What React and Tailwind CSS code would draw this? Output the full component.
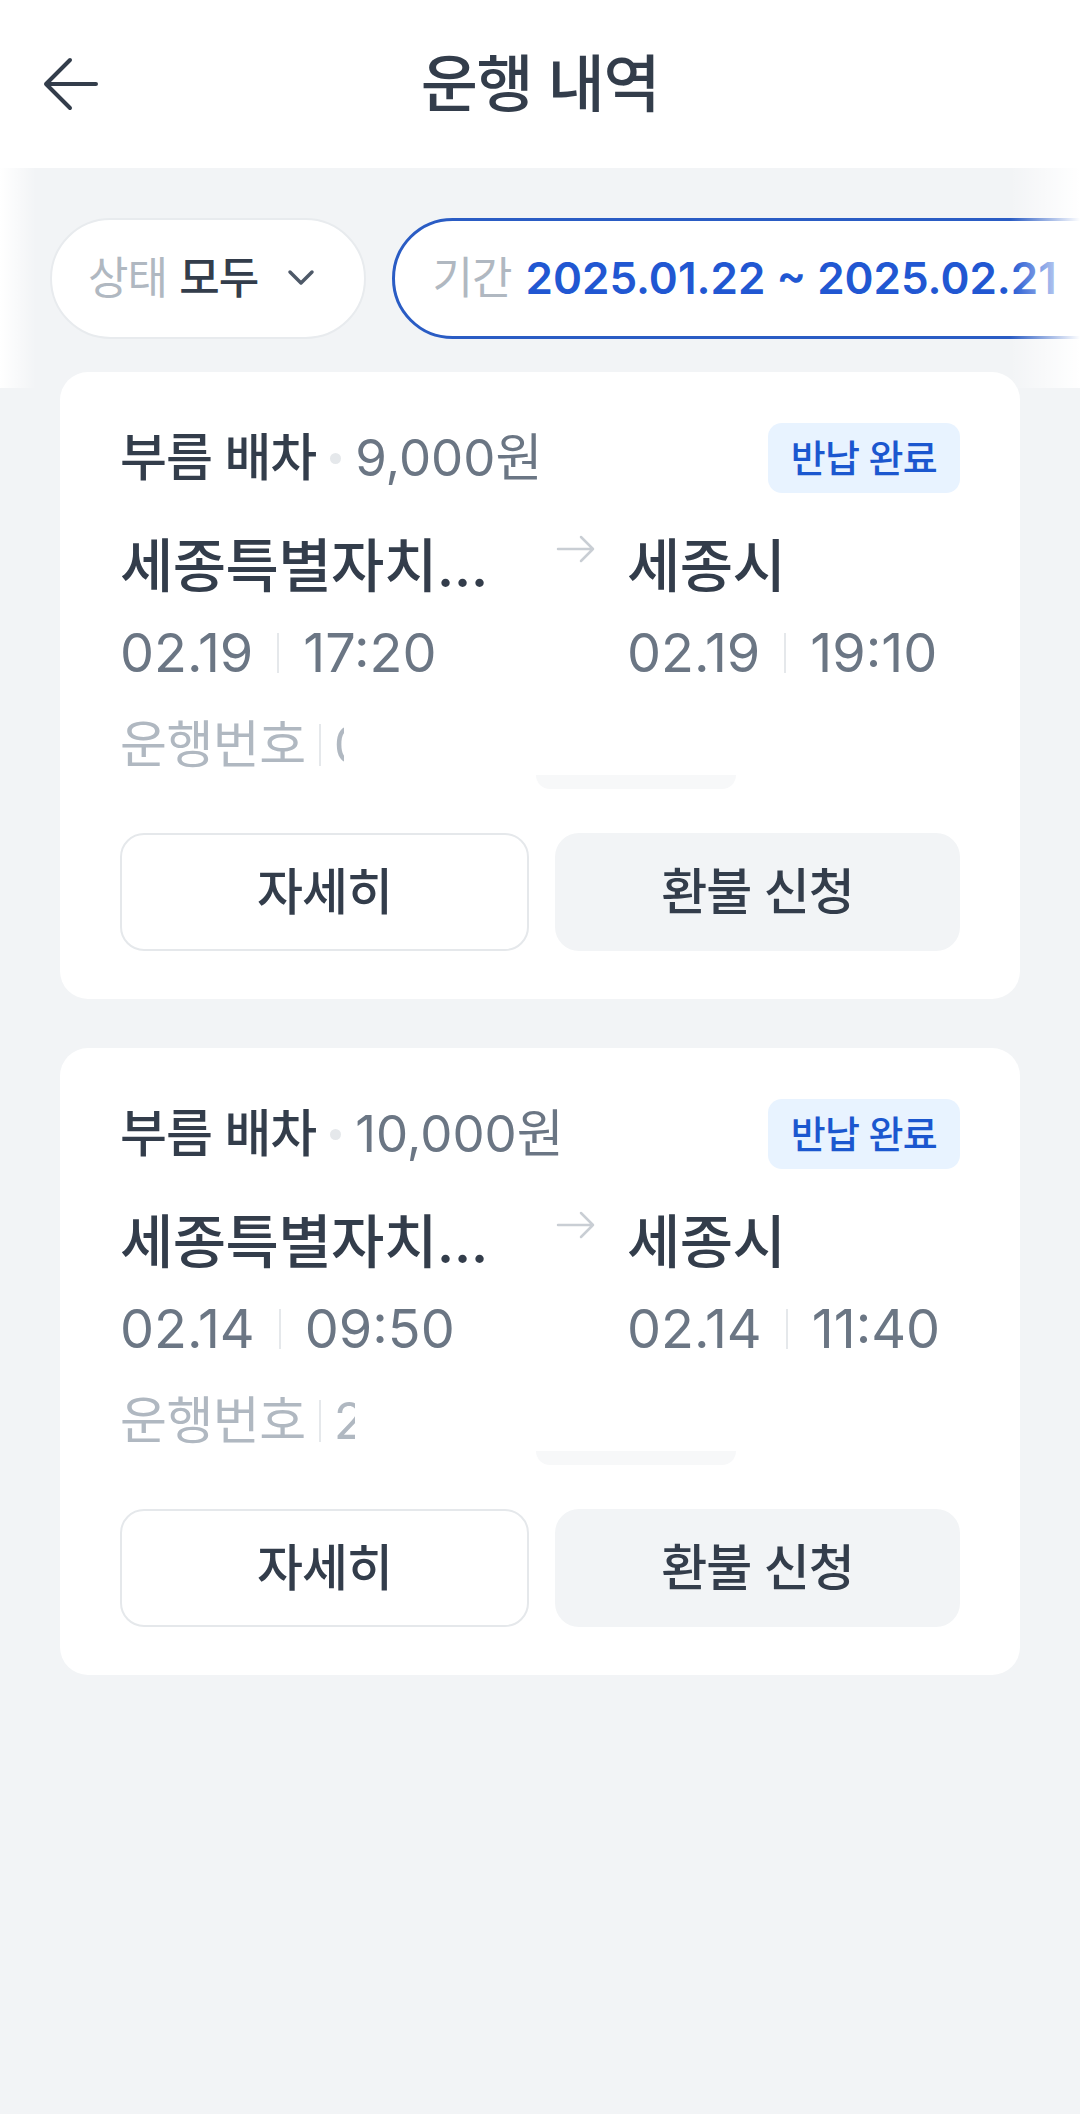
import React from "react";

const trips = [
  {
    price: "9,000원",
    from: "세종특별자치...",
    to: "세종시",
    date: "02.19",
    start: "17:20",
    end: "19:10",
    no: "0",
    noWidth: "w-[10px]",
  },
  {
    price: "10,000원",
    from: "세종특별자치...",
    to: "세종시",
    date: "02.14",
    start: "09:50",
    end: "11:40",
    no: "2",
    noWidth: "w-[21px]",
  },
];

const BackIcon = () => (
  <svg viewBox="0 0 56 56" className="w-[56px] h-[56px]" fill="none" stroke="#333d4b" strokeWidth={4} strokeLinecap="round" strokeLinejoin="round">
    <path d="M27 4 3 28l24 24M3 28h50" />
  </svg>
);

const Chevron = () => (
  <svg viewBox="0 0 30 20" className="w-[30px] h-[20px]" fill="none" stroke="#4e5968" strokeWidth={3.5} strokeLinecap="round" strokeLinejoin="round">
    <path d="M4 4l11 11L26 4" />
  </svg>
);

const SmallArrow = () => (
  <svg viewBox="0 0 40 28" className="w-[40px] h-[28px]" fill="none" stroke="#c9ced4" strokeWidth={2.5} strokeLinecap="round" strokeLinejoin="round">
    <path d="M2 14h35M25 2l12 12-12 12" />
  </svg>
);

const DateTime = ({ date, time }) => (
  <div className="mt-[23px] flex items-center h-[64px] text-[54px] leading-[64px] text-[#6b7684]">
    <span>{date}</span>
    <span className="mx-[24px] w-[2px] h-[40px] bg-[#e5e8eb]" />
    <span>{time}</span>
  </div>
);

const TripCard = ({ trip }) => (
  <div className="rounded-[28px] bg-white px-[60px] pt-[51px] pb-[48px]">
    <div className="flex items-center justify-between h-[70px]">
      <div className="flex items-center text-[51px]">
        <span className="font-medium text-[#333d4b] tracking-[-0.02em]">부름 배차</span>
        <span className="mx-[14px] w-[11px] h-[11px] rounded-full bg-[#e5e8eb]" />
        <span className="text-[#6b7684]">{trip.price}</span>
      </div>
      <span className="h-[70px] px-[23px] flex items-center rounded-[14px] bg-[#e8f3ff] text-[#1b57cf] text-[38px] font-medium tracking-[-0.02em]">
        반납 완료
      </span>
    </div>

    <div className="mt-[41px] flex">
      <div className="w-[436px]">
        <div className="h-[64px] text-[58px] leading-[64px] font-medium text-[#333d4b] tracking-[-0.01em] whitespace-nowrap">
          {trip.from}
        </div>
        <DateTime date={trip.date} time={trip.start} />
      </div>
      <div className="w-[40px] mt-[1px]">
        <SmallArrow />
      </div>
      <div className="ml-[31px] flex-1">
        <div className="h-[64px] text-[58px] leading-[64px] font-medium text-[#333d4b] tracking-[-0.01em]">
          {trip.to}
        </div>
        <DateTime date={trip.date} time={trip.end} />
      </div>
    </div>

    <div className="relative mt-[32px] h-[56px] flex items-center text-[51px] leading-[56px] text-[#b0b8c1] tracking-[-0.01em]">
      <span>운행번호</span>
      <span className="mx-[13px] w-[2px] h-[42px] bg-[#e5e8eb]" />
      <span className={`${trip.noWidth} overflow-hidden`}>{trip.no}</span>
      <span className="absolute left-[416px] top-[58px] w-[200px] h-[14px] rounded-b-[40px] bg-[#f7f8f9]" />
    </div>

    <div className="mt-[60px] flex gap-[26px]">
      <button className="flex-1 h-[118px] rounded-[24px] border-2 border-[#e5e8eb] bg-white text-[50px] font-medium text-[#333d4b] tracking-[-0.02em]">
        자세히
      </button>
      <button className="flex-1 h-[118px] rounded-[24px] bg-[#f2f4f6] text-[50px] font-medium text-[#333d4b] tracking-[-0.02em]">
        환불 신청
      </button>
    </div>
  </div>
);

export default function App() {
  return (
    <div className="min-h-[2114px] bg-[#f2f4f6] font-['Inter','Noto_Sans_CJK_KR',sans-serif]">
      <header className="h-[168px] bg-white grid grid-cols-[1fr_auto_1fr] items-center">
        <div className="pl-[43px] flex items-center">
          <BackIcon />
        </div>
        <h1 className="text-[62px] font-medium text-[#333d4b] tracking-[-0.02em]">운행 내역</h1>
        <div />
      </header>

      <div className="relative h-[220px] overflow-hidden flex items-center gap-[26px] pl-[50px]">
        <div className="shrink-0 h-[121px] flex items-center rounded-full border-2 border-[#e8ebee] bg-white pl-[36px] pr-[48px] text-[44px] tracking-[-0.02em]">
          <span className="text-[#b0b8c1]">상태</span>
          <span className="ml-[12px] font-medium text-[#333d4b]">모두</span>
          <span className="ml-[28px] flex items-center">
            <Chevron />
          </span>
        </div>
        <div className="shrink-0 h-[121px] flex items-center rounded-full border-[3px] border-[#2a5cc4] bg-white pl-[37px] pr-[80px] text-[44px] whitespace-nowrap">
          <span className="text-[#b0b8c1] tracking-[-0.02em]">기간</span>
          <span className="ml-[14px] font-semibold text-[#2157d2]">2025.01.22 ~ 2025.02.21</span>
        </div>
        <div className="absolute left-0 top-0 h-full w-[36px] bg-gradient-to-r from-white to-transparent" />
        <div className="absolute right-0 top-0 h-full w-[70px] bg-gradient-to-l from-white to-transparent" />
      </div>

      <div className="relative z-10 -mt-[16px] px-[60px] flex flex-col gap-[49px]">
        {trips.map((t, i) => (
          <TripCard key={i} trip={t} />
        ))}
      </div>
    </div>
  );
}
